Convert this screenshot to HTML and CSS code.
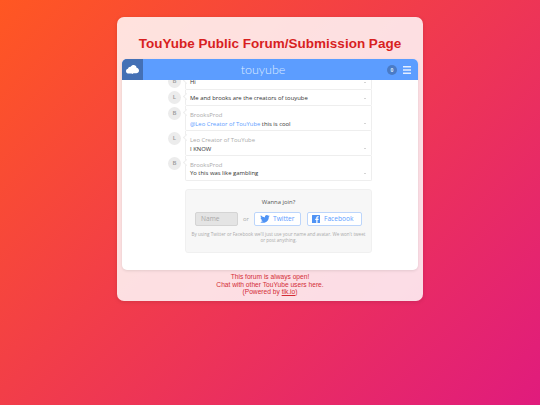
FILE: index.html
```html
<!DOCTYPE html>
<html lang="en">
<head>
<meta charset="utf-8">
<title>TouYube Public Forum</title>
<link rel="stylesheet" href="styles.css">
</head>
<body>
<main class="card">
  <h1 class="title">TouYube Public Forum/Submission Page</h1>
  <section class="frame">
    <header class="bar">
      <div class="logo-box">
        <svg class="cloud" viewBox="0 0 16 11" width="13" height="9"><path d="M3.5 10.500C1.500 10.500 0 9.200 0 7.500 0 6 1 4.900 2.400 4.700 2.800 2.800 4.300 1.800 5.800 2.100 6.600.8 7.900 0 9.300 0c2 0 3.500 1.400 3.700 3.300 1.700.2 3 1.600 3 3.400 0 2.100-1.600 3.400-3.400 3.400H9.200L8 11l-1.200-.5z" fill="#fff"/></svg>
      </div>
      <div class="brand">touyube</div>
      <div class="bar-tools">
        <span class="count">0</span>
        <svg class="menu" viewBox="0 0 8 8" width="8" height="8"><path d="M0 0h8v1.600H0zM0 3.200h8v1.600H0zM0 6.400h8V8H0z" fill="#e4eeff"/></svg>
      </div>
    </header>
    <div class="content">
      <div class="column">
        <div class="messages">
          <article class="msg"><div class="avatar">B</div><div class="bubble plain"><p class="text">Hi</p><span class="more"></span></div></article>
          <article class="msg"><div class="avatar">L</div><div class="bubble plain"><p class="text">Me and brooks are the creators of touyube</p><span class="more"></span></div></article>
          <article class="msg"><div class="avatar">B</div><div class="bubble"><p class="name">BrooksProd</p><p class="text"><a class="mention">@Leo Creator of TouYube</a> this is cool</p><span class="more"></span></div></article>
          <article class="msg"><div class="avatar">L</div><div class="bubble"><p class="name">Leo Creator of TouYube</p><p class="text">I KNOW</p><span class="more"></span></div></article>
          <article class="msg"><div class="avatar">B</div><div class="bubble"><p class="name">BrooksProd</p><p class="text">Yo this was like gambling</p><span class="more"></span></div></article>
        </div>
        <section class="join">
          <p class="join-title">Wanna join?</p>
          <div class="join-row">
            <div class="name-field">Name</div>
            <span class="or">or</span>
            <div class="social twitter">
              <svg viewBox="0 0 24 20" width="10" height="8"><path d="M24 2.400c-.9.4-1.800.7-2.800.8 1-.6 1.800-1.600 2.200-2.700-1 .6-2 1-3.100 1.200C19.300.7 18 0 16.600 0c-2.700 0-4.900 2.200-4.900 4.900 0 .4 0 .8.100 1.100C7.700 5.800 4.100 3.900 1.700.9 1.300 1.600 1 2.500 1 3.400c0 1.700.9 3.200 2.200 4.100-.8 0-1.600-.2-2.200-.6v.1c0 2.400 1.700 4.400 3.900 4.800-.4.1-.8.2-1.300.2-.3 0-.6 0-.9-.1.6 2 2.400 3.400 4.600 3.400-1.700 1.300-3.800 2.100-6.100 2.100-.4 0-.8 0-1.200-.1C2.200 18.700 4.800 19.500 7.500 19.500c9.100 0 14-7.500 14-14v-.6c1-.7 1.800-1.600 2.500-2.500z" fill="#4f93f5"/></svg>
              <span>Twitter</span>
            </div>
            <div class="social facebook">
              <svg viewBox="0 0 16 16" width="8" height="8"><path d="M1 0h14a1 1 0 0 1 1 1v14a1 1 0 0 1-1 1h-4V10h2l.4-2.500H11V6c0-.8.3-1.300 1.300-1.300h1.200V2.500c-.4 0-1-.1-1.800-.1-2 0-3.200 1.200-3.200 3.300v1.800h-2V10h2v6H1a1 1 0 0 1-1-1V1a1 1 0 0 1 1-1z" fill="#4f93f5"/></svg>
              <span>Facebook</span>
            </div>
          </div>
          <p class="join-note">By using Twitter or Facebook we'll just use your name and avatar. We won't tweet or post anything.</p>
        </section>
      </div>
    </div>
  </section>
  <footer class="foot">
    This forum is always open!<br>
    Chat with other TouYube users here.<br>
    (Powered by <a class="foot-link">tlk.io</a>)
  </footer>
</main>
</body>
</html>
```
FILE: styles.css
```css
* { box-sizing: border-box; }
html, body { height: 100%; }
body {
  margin: 0;
  height: 405px;
  overflow: hidden;
  background: linear-gradient(135deg, #ff5722, #e01b7d);
  font-family: "Liberation Sans", Arial, sans-serif;
  padding: 17px 117px 0;
}
p { margin: 0; }
.card {
  width: 306px;
  height: 284px;
  padding: 0 5px;
  border-radius: 7px;
  background: rgba(255, 255, 255, .84);
  box-shadow: 0 1px 4px rgba(0, 0, 0, .12);
}
.title {
  margin: 0;
  height: 42px;
  padding-top: 19px;
  text-align: center;
  font-size: 13.500px;
  line-height: 15px;
  font-weight: 700;
  color: #d81f1f;
}
.frame {
  display: flex;
  flex-direction: column;
  height: 211px;
  border-radius: 5px;
  overflow: hidden;
  background: #fff;
  box-shadow: 0 1px 3px rgba(0, 0, 0, .1);
}
.bar {
  flex: none;
  display: flex;
  align-items: center;
  height: 21px;
  background: #5c9dff;
}
.logo-box {
  flex: none;
  display: flex;
  align-items: center;
  justify-content: center;
  width: 21px;
  height: 21px;
  background: #4470b5;
}
.brand {
  flex: 1;
  padding-right: 4px;
  text-align: center;
  font: 300 12.500px/21px Lato, sans-serif;
  color: #dcebff;
}
.bar-tools {
  flex: none;
  display: flex;
  align-items: center;
  gap: 6px;
  padding-right: 7px;
}
.count {
  width: 10px;
  height: 10px;
  border-radius: 50%;
  background: #4a7bc6;
  color: #dce8fb;
  font: 700 5px/10px "Open Sans", sans-serif;
  text-align: center;
}
.menu { display: block; }
.content {
  flex: 1;
  min-height: 0;
  display: flex;
  justify-content: center;
  overflow: hidden;
}
.column {
  width: 204px;
  display: flex;
  flex-direction: column;
  justify-content: flex-end;
  padding-bottom: 17px;
}
.messages { flex: none; display: flex; flex-direction: column; }
.msg {
  display: flex;
  gap: 4px;
}
.avatar {
  flex: none;
  width: 13px;
  height: 13px;
  margin-top: 1px;
  border-radius: 50%;
  background: #ececec;
  color: #999;
  font: 600 6px/13px "Open Sans", sans-serif;
  text-align: center;
}
.bubble {
  position: relative;
  flex: 1;
  min-width: 0;
  padding: 4.700px 5px 2px 4px;
  background: #fff;
  border: 1px solid #eee;
  border-top-width: 0;
  border-radius: 0 0 2px 2px;
}
.bubble::before {
  content: "";
  position: absolute;
  left: -2.500px;
  top: 4px;
  width: 4px;
  height: 4px;
  background: #fff;
  border-left: 1px solid #eee;
  border-bottom: 1px solid #eee;
  transform: rotate(45deg);
}
.bubble.plain { padding: 4px 5px 2.500px 4px; }
.name {
  font: 400 5.900px/8.600px "Open Sans", sans-serif;
  color: #aaa;
}
.text {
  font: 400 5.900px/8.600px "Open Sans", sans-serif;
  color: #333;
  white-space: nowrap;
}
.mention { color: #5c9dff; }
.more {
  position: absolute;
  right: 5px;
  bottom: 6px;
  width: 2px;
  height: 1px;
  background: #d4d4d4;
}
.join {
  flex: none;
  height: 64px;
  margin: 8px 0 0 17px;
  padding-top: 7.500px;
  background: #f7f7f7;
  border: 1px solid #f0f0f0;
  border-radius: 3px;
  text-align: center;
}
.join-title {
  font: 400 5.900px/9px "Open Sans", sans-serif;
  color: #555;
}
.join-row {
  display: flex;
  align-items: center;
  justify-content: center;
  margin-top: 5.500px;
}
.name-field {
  width: 43px;
  height: 14px;
  padding-left: 5px;
  background: #e4e4e4;
  border: 1px solid #d4d4d4;
  border-radius: 2px;
  color: #a8a8a8;
  font: 400 6.600px/12px "Open Sans", sans-serif;
  text-align: left;
}
.or {
  width: 16px;
  font: 400 5.900px/9px "Open Sans", sans-serif;
  color: #aaa;
}
.social {
  display: flex;
  align-items: center;
  height: 14px;
  background: #fff;
  border: 1px solid #bcd5fb;
  border-radius: 2px;
  color: #5c9dff;
  font: 400 6.600px/12px "Open Sans", sans-serif;
}
.twitter { width: 47px; padding-left: 5px; gap: 3px; margin-right: 6px; }
.facebook { width: 55px; padding-left: 4px; gap: 4px; }
.join-note {
  margin: 6px 4px 0;
  font: 400 4.600px/5.500px "Open Sans", sans-serif;
  color: #aaa;
}
.foot {
  padding-top: 3px;
  text-align: center;
  font-size: 6.650px;
  line-height: 7.700px;
  color: #d32c36;
}
.foot-link { text-decoration: underline; }
```
